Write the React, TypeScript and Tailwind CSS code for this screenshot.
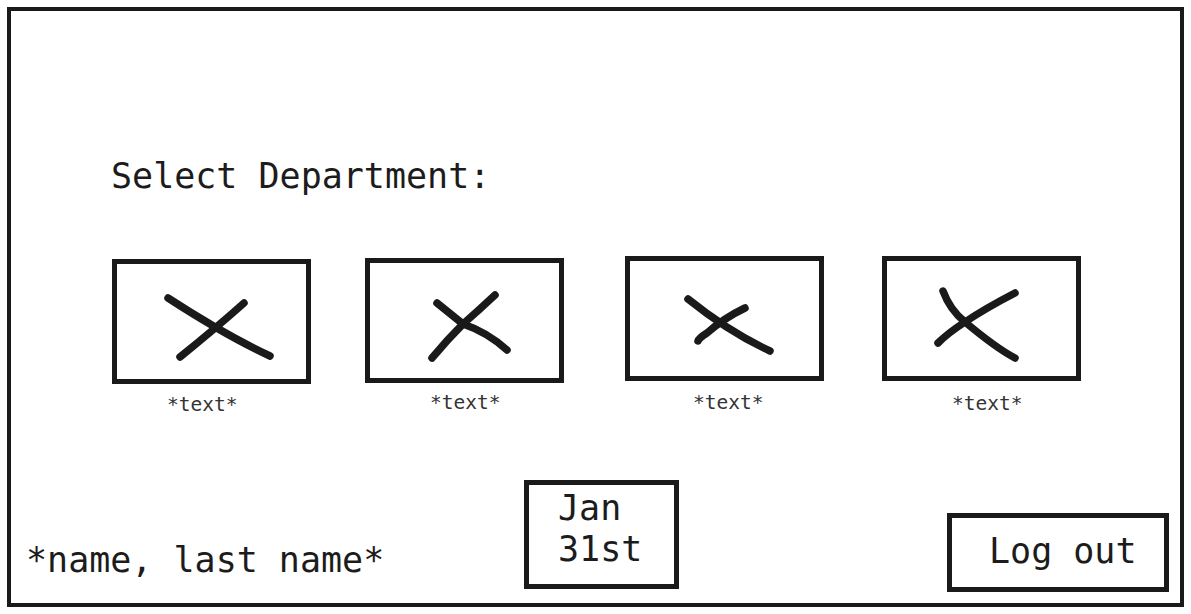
import React from "react";

const font = { fontFamily: '"DejaVu Sans Mono", "Liberation Mono", monospace' };

type Tile = {
  mlBox: string;
  mtBox: string;
  labelMt: string;
  labelMl: string;
  a: string;
  b: string;
};

const tiles: Tile[] = [
  {
    mlBox: "ml-[101px]",
    mtBox: "mt-[3px]",
    labelMt: "mt-[9px]",
    labelMl: "ml-[55px]",
    a: "M51,34 Q108,71 153,92",
    b: "M127,39 Q99,64 63,93",
  },
  {
    mlBox: "ml-[54px]",
    mtBox: "mt-[2px]",
    labelMt: "mt-[8px]",
    labelMl: "ml-[65px]",
    a: "M67,40 L93,61 Q117,69 137,87",
    b: "M125,32 Q109,47 93,61 Q77,77 62,95",
  },
  {
    mlBox: "ml-[61px]",
    mtBox: "mt-0",
    labelMt: "mt-[10px]",
    labelMl: "ml-[68px]",
    a: "M58,38 Q99,71 140,90",
    b: "M115,47 Q94,57 77,72 Q69,77 68,80",
  },
  {
    mlBox: "ml-[58px]",
    mtBox: "mt-0",
    labelMt: "mt-[11px]",
    labelMl: "ml-[70px]",
    a: "M56,30 Q63,49 78,61 Q109,87 128,97",
    b: "M128,32 Q99,47 78,61 Q61,72 51,82",
  },
];

export default function App() {
  return (
    <div className="w-[1191px] h-[614px] bg-white p-[7px]" style={font}>
      <div className="h-full w-[1177px] border-4 border-[#1a1a1a] flex flex-col text-[#1c1c1c]">
        <div className="mt-[145px] pl-[100px] text-[35px] leading-[40px]">
          Select Department:
        </div>
        <div className="mt-[60px] flex items-start">
          {tiles.map((t, i) => (
            <div key={i} className={`${t.mlBox} flex flex-col`}>
              <div
                className={`${t.mtBox} w-[199px] h-[125px] border-[5px] border-[#1a1a1a]`}
              >
                <svg width="189" height="115" viewBox="0 0 189 115" className="block">
                  <path
                    d={t.a}
                    fill="none"
                    stroke="#1a1a1a"
                    strokeWidth="7.5"
                    strokeLinecap="round"
                    strokeLinejoin="round"
                  />
                  <path
                    d={t.b}
                    fill="none"
                    stroke="#1a1a1a"
                    strokeWidth="7.5"
                    strokeLinecap="round"
                    strokeLinejoin="round"
                  />
                </svg>
              </div>
              <div
                className={`${t.labelMt} ${t.labelMl} text-[19.5px] leading-[24px] text-[#333]`}
              >
                *text*
              </div>
            </div>
          ))}
        </div>
        <div className="flex-1" />
        <div className="flex items-end">
          <div className="w-[513px] pl-[15px] mb-[23px] text-[35px] leading-[40px]">
            *name, last name*
          </div>
          <div className="mb-[14px] w-[155px] h-[109px] border-[5px] border-[#1a1a1a] pl-[29px] pt-[3px] text-[35px] leading-[41px]">
            <div>Jan</div>
            <div>31st</div>
          </div>
          <div className="flex-1" />
          <div className="mb-[11px] mr-[11px] w-[222px] h-[79px] border-[5px] border-[#1a1a1a] flex items-center pl-[37px] pb-[3px] text-[35px] leading-[40px]">
            Log out
          </div>
        </div>
      </div>
    </div>
  );
}
